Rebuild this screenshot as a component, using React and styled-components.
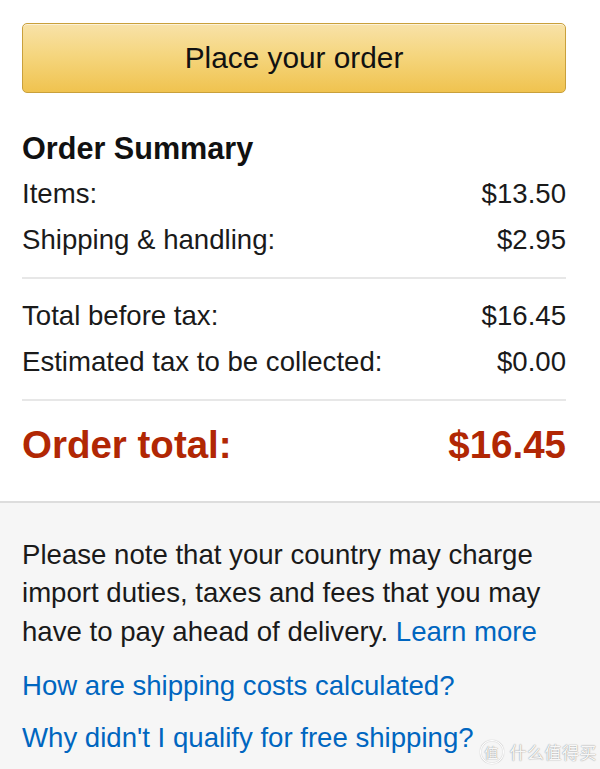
import React from "react";
import styled, { createGlobalStyle } from "styled-components";

const GlobalStyle = createGlobalStyle`
  html, body {
    margin: 0;
    padding: 0;
    background: #ffffff;
  }
  body {
    font-family: "Liberation Sans", Arial, sans-serif;
    color: #111111;
  }
  #root {
    min-height: 100vh;
  }
`;

const Page = styled.div`
  position: relative;
  min-height: 100vh;
  display: flex;
  flex-direction: column;
`;

const SummaryBox = styled.section`
  padding: 23px 34px 32px 22px;
  display: flex;
  flex-direction: column;
`;

const PlaceOrderButton = styled.button`
  box-sizing: border-box;
  width: 100%;
  height: 70px;
  border: 1px solid #c9a03b;
  border-radius: 5px;
  background: linear-gradient(to bottom, #f8e2a8 0%, #f5d67f 45%, #f0c34f 100%);
  box-shadow: inset 0 1px 0 rgba(255, 255, 255, 0.55);
  font-family: "Liberation Sans", Arial, sans-serif;
  font-size: 29.8px;
  color: #111111;
  cursor: pointer;
  padding: 0;
`;

const Heading = styled.h3`
  margin: 36.5px 0 5px;
  font-size: 30.6px;
  line-height: 36px;
  font-weight: 700;
  color: #111111;
`;

const Row = styled.div`
  display: flex;
  justify-content: space-between;
  align-items: baseline;
  font-size: 27.6px;
  line-height: 46px;
  color: #1a1a1a;
`;

const TotalRow = styled(Row)`
  font-size: 38.5px;
  line-height: 48px;
  font-weight: 700;
  color: #b12704;
`;

const Divider = styled.hr`
  border: 0;
  height: 2px;
  background: #e7e7e7;
  margin: ${(p) => p.$top}px 0 ${(p) => p.$bottom}px;
`;

const NoteBox = styled.section`
  flex: 1;
  background: #f6f6f6;
  border-top: 2px solid #dddddd;
  padding: 33px 34px 12px 22px;
  font-size: 27.6px;
  line-height: 38.5px;
  color: #1a1a1a;
`;

const Note = styled.p`
  margin: 0;
`;

const Link = styled.a`
  color: #0066c0;
  text-decoration: none;
  cursor: pointer;
`;

const LinkLine = styled.div`
  margin-top: ${(p) => p.$gap}px;
`;

const Watermark = styled.div`
  position: absolute;
  right: 3px;
  bottom: 5px;
  display: flex;
  align-items: center;
  gap: 6px;
  color: rgba(255, 255, 255, 0.95);
  font-family: "Noto Sans CJK SC", sans-serif;
  font-size: 17px;
  letter-spacing: 0.5px;
  text-shadow: 0 0 1px rgba(0, 0, 0, 0.45), 0 0 2px rgba(0, 0, 0, 0.15);
  pointer-events: none;
`;

const WatermarkBadge = styled.span`
  display: inline-flex;
  align-items: center;
  justify-content: center;
  width: 22px;
  height: 22px;
  border-radius: 50%;
  border: 1.5px solid rgba(255, 255, 255, 0.95);
  box-shadow: 0 0 1px rgba(0, 0, 0, 0.4), inset 0 0 1px rgba(0, 0, 0, 0.4);
  font-size: 14px;
`;

const lines = [
  ["Items:", "$13.50"],
  ["Shipping & handling:", "$2.95"],
];

const taxLines = [
  ["Total before tax:", "$16.45"],
  ["Estimated tax to be collected:", "$0.00"],
];

export default function App() {
  return (
    <Page>
      <GlobalStyle />
      <SummaryBox>
        <PlaceOrderButton>Place your order</PlaceOrderButton>
        <Heading>Order Summary</Heading>
        {lines.map(([label, value]) => (
          <Row key={label}>
            <span>{label}</span>
            <span>{value}</span>
          </Row>
        ))}
        <Divider $top={14} $bottom={14} />
        {taxLines.map(([label, value]) => (
          <Row key={label}>
            <span>{label}</span>
            <span>{value}</span>
          </Row>
        ))}
        <Divider $top={14} $bottom={20} />
        <TotalRow>
          <span>Order total:</span>
          <span>$16.45</span>
        </TotalRow>
      </SummaryBox>
      <NoteBox>
        <Note>
          Please note that your country may charge import duties, taxes and
          fees that you may have to pay ahead of delivery.{" "}
          <Link>Learn more</Link>
        </Note>
        <LinkLine $gap={16}>
          <Link>How are shipping costs calculated?</Link>
        </LinkLine>
        <LinkLine $gap={13}>
          <Link>Why didn't I qualify for free shipping?</Link>
        </LinkLine>
      </NoteBox>
      <Watermark>
        <WatermarkBadge>值</WatermarkBadge>
        <span>什么值得买</span>
      </Watermark>
    </Page>
  );
}
